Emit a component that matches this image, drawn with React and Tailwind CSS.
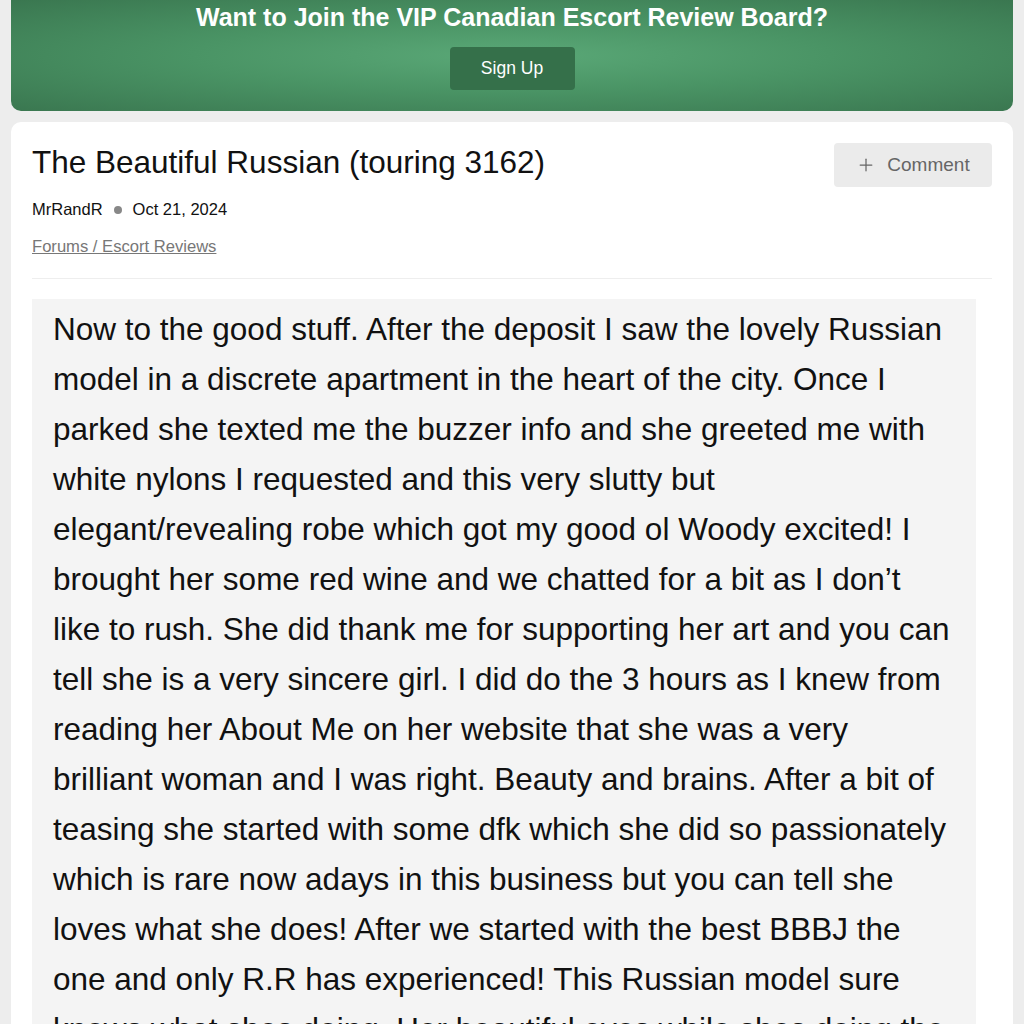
import { Plus } from "lucide-react";

const lines = [
  "Now to the good stuff. After the deposit I saw the lovely Russian",
  "model in a discrete apartment in the heart of the city. Once I",
  "parked she texted me the buzzer info and she greeted me with",
  "white nylons I requested and this very slutty but",
  "elegant/revealing robe which got my good ol Woody excited! I",
  "brought her some red wine and we chatted for a bit as I don\u2019t",
  "like to rush. She did thank me for supporting her art and you can",
  "tell she is a very sincere girl. I did do the 3 hours as I knew from",
  "reading her About Me on her website that she was a very",
  "brilliant woman and I was right. Beauty and brains. After a bit of",
  "teasing she started with some dfk which she did so passionately",
  "which is rare now adays in this business but you can tell she",
  "loves what she does! After we started with the best BBBJ the",
  "one and only R.R has experienced! This Russian model sure",
  "knows what shes doing. Her beautiful eyes while shes doing the",
];

export default function App() {
  return (
    <div className="h-[1024px] overflow-hidden bg-[#ededed] px-[11px] font-['Liberation_Sans',Arial,sans-serif]">
      {/* banner */}
      <div className="flex flex-col items-center rounded-b-[10px] bg-[radial-gradient(ellipse_at_center,#5aa877_0%,#4a9465_45%,#3a7750_100%)] pb-[21px]">
        <h2 className="mt-[2px] text-[25px] font-bold leading-[30px] text-white">
          Want to Join the VIP Canadian Escort Review Board?
        </h2>
        <button className="mt-[15px] h-[43px] w-[125px] rounded-[4px] bg-[#35704a] text-[17.5px] text-white">
          Sign Up
        </button>
      </div>

      {/* post card */}
      <div className="mt-[11px] rounded-t-[10px] bg-white px-[21px] pt-[20px]">
        <div className="flex items-start justify-between">
          <div>
            <h1 className="text-[31.5px] leading-[40px] text-[#111]">
              The Beautiful Russian (touring 3162)
            </h1>
            <div className="mt-[18px] flex items-center text-[16.5px] leading-[19px] text-[#111]">
              <span>MrRandR</span>
              <span className="mx-[11px] h-[8px] w-[8px] rounded-full bg-[#888]" />
              <span>Oct 21, 2024</span>
            </div>
            <a className="mt-[18px] block text-[16.6px] leading-[19px] text-[#777] underline">
              Forums / Escort Reviews
            </a>
          </div>
          <button className="mt-px flex h-[44px] w-[158px] items-center justify-center gap-[11px] rounded-[4px] bg-[#ebebeb] text-[19px] text-[#666]">
            <Plus size={20} strokeWidth={1.5} />
            Comment
          </button>
        </div>
        <div className="mt-[22px] h-px bg-[#eeeeee]" />
        <div className="mt-[20px] mr-[16px] bg-[#f4f4f4] px-[21px] pt-[5px] pb-[20px]">
          {lines.map((l, i) => (
            <p key={i} className="whitespace-nowrap text-[31.5px] leading-[50px] text-[#111]">
              {l}
            </p>
          ))}
        </div>
      </div>
    </div>
  );
}
